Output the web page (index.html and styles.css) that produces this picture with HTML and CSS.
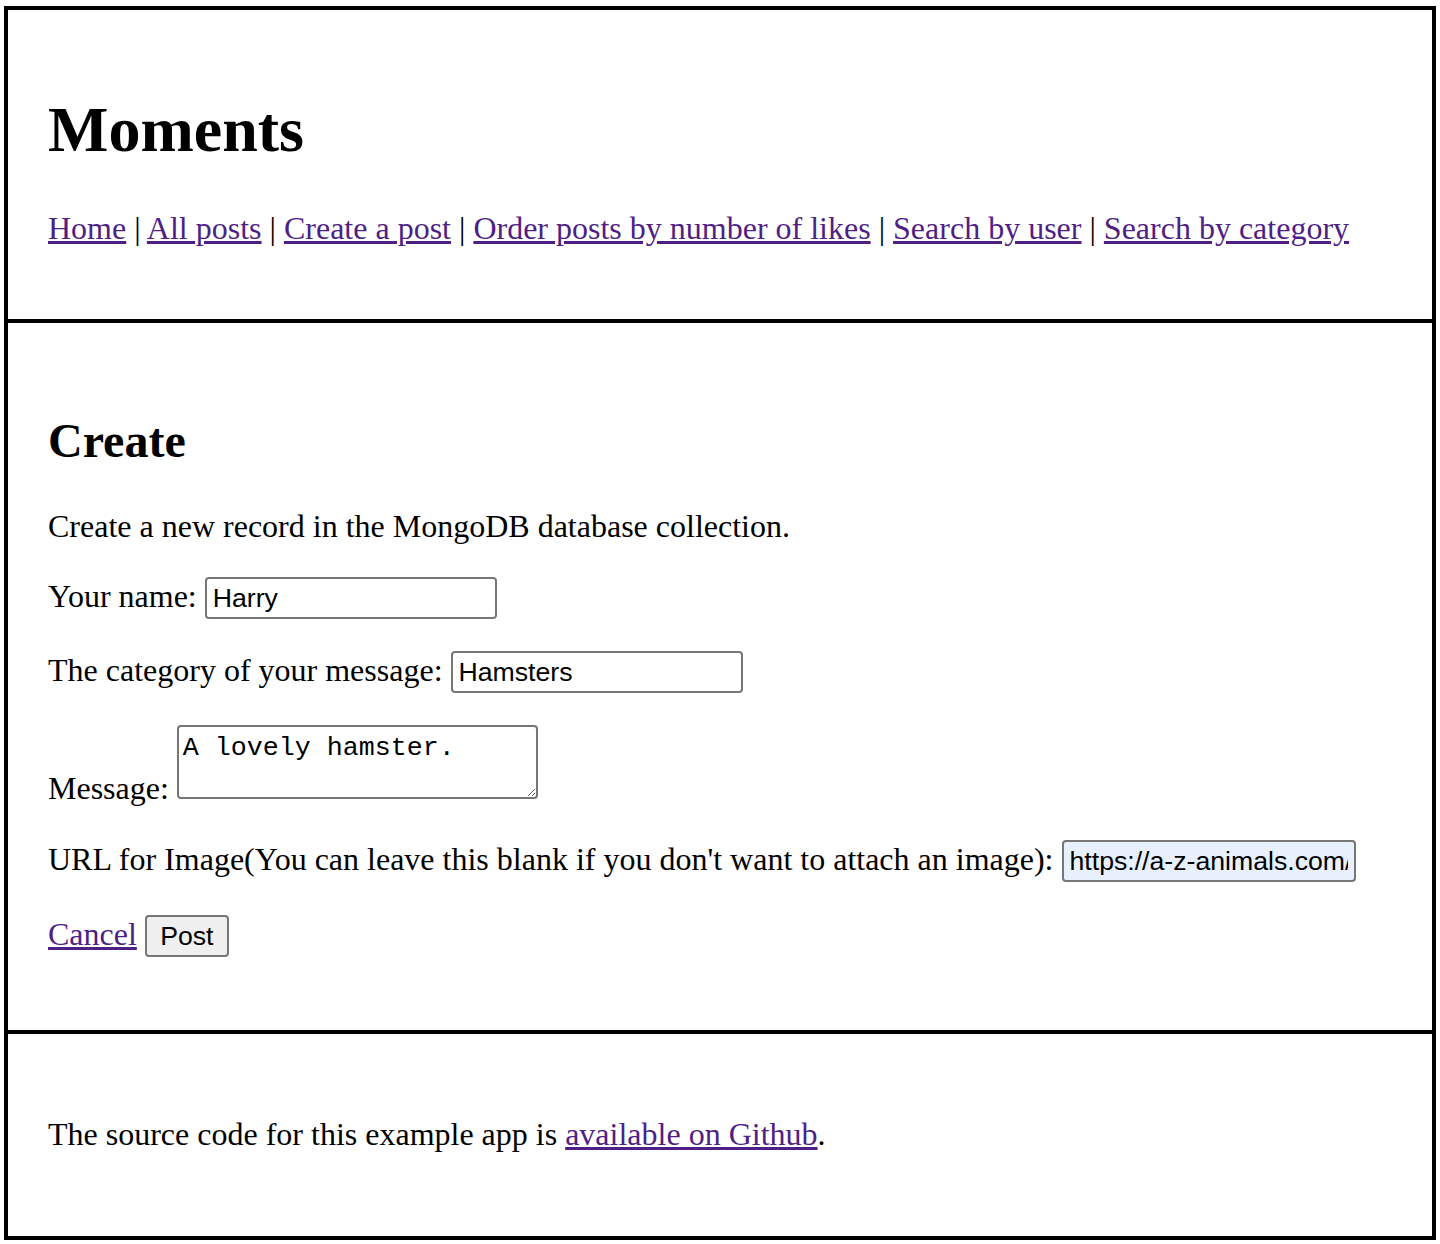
FILE: index.html
```html
<!DOCTYPE html>
<html lang="en">
<head>
<meta charset="utf-8">
<title>Moments</title>
<link rel="stylesheet" href="styles.css">
</head>
<body>
<div class="frame">
  <header class="section header">
    <h1 class="title">Moments</h1>
    <p class="nav"><a href="#">Home</a> | <a href="#">All posts</a> | <a href="#">Create a post</a> | <a href="#">Order posts by number of likes</a> | <a href="#">Search by user</a> | <a href="#">Search by category</a></p>
  </header>
  <main class="section main">
    <h2 class="subtitle">Create</h2>
    <p class="row">Create a new record in the MongoDB database collection.</p>
    <form class="form">
      <p class="row">Your name: <input class="field" type="text" value="Harry"></p>
      <p class="row">The category of your message: <input class="field" type="text" value="Hamsters"></p>
      <p class="row row-area">Message: <textarea class="area">A lovely hamster.</textarea></p>
      <p class="row row-url">URL for Image(You can leave this blank if you don't want to attach an image): <input class="field field-auto" type="text" value="https://a-z-animals.com/media/2021/11/hamster.jpg"></p>
      <p class="row"><a href="#">Cancel</a> <button class="btn" type="button">Post</button></p>
    </form>
  </main>
  <footer class="section footer">
    <p class="row">The source code for this example app is <a href="#">available on Github</a>.</p>
  </footer>
</div>
</body>
</html>
```
FILE: styles.css
```css
html, body {
  background: #fff;
}
body {
  margin: 6px 4px 5px 4px;
  font-family: "Liberation Serif", "Times New Roman", serif;
  font-size: 32px;
  color: #000;
}
a {
  color: #4f1f86;
}
.frame {
  border: 2px solid #000;
}
.section {
  border: 2px solid #000;
}
.header {
  padding: 40px 40px;
}
.main {
  padding: 50px 40px 41px;
}
.footer {
  padding: 50px 40px 51px;
}
.title {
  font-size: 64px;
  margin: 43px 0;
  font-weight: bold;
}
.subtitle {
  font-size: 48px;
  margin: 40px 0;
  font-weight: bold;
}
.nav, .row {
  margin: 32px 0;
}
.row-area {
  margin-bottom: 33px;
}
.row-url {
  margin-bottom: 33px;
}
.form {
  margin: 0;
}
.field {
  box-sizing: border-box;
  width: 292px;
  height: 42px;
  margin: 0;
  padding: 0 6px;
  border: 2px solid #767676;
  border-radius: 4px;
  font-family: "Liberation Sans", Arial, sans-serif;
  font-size: 26.67px;
  color: #000;
  background: #fff;
}
.field-auto {
  width: 294px;
  background: #e8f0fe;
}
.area {
  box-sizing: border-box;
  width: 361px;
  height: 74px;
  margin: 0;
  padding: 6px 4px 4px;
  border: 2px solid #767676;
  border-radius: 4px;
  font-family: "Liberation Mono", "Courier New", monospace;
  font-size: 26.67px;
  color: #000;
  vertical-align: baseline;
}
.btn {
  box-sizing: border-box;
  height: 42px;
  width: 84px;
  margin: 0;
  padding: 0;
  border: 2px solid #767676;
  border-radius: 4px;
  background: #efefef;
  font-family: "Liberation Sans", Arial, sans-serif;
  font-size: 26.67px;
  color: #000;
}
```
